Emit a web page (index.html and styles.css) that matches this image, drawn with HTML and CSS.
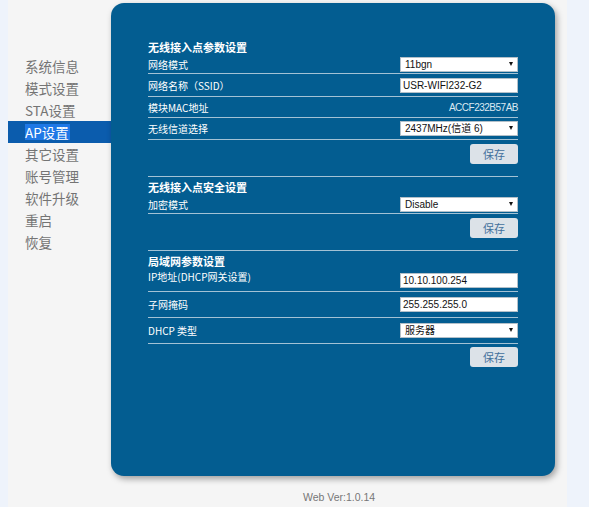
FILE: index.html
```html
<!DOCTYPE html>
<html lang="zh-CN">
<head>
<meta charset="utf-8">
<title>AP设置</title>
<link rel="stylesheet" href="styles.css">
</head>
<body>
<div class="page">
  <div class="layout">
    <ul class="menu">
      <li class="menu-item">系统信息</li>
      <li class="menu-item">模式设置</li>
      <li class="menu-item">STA设置</li>
      <li class="menu-item active"><span class="menu-label">AP设置</span></li>
      <li class="menu-item">其它设置</li>
      <li class="menu-item">账号管理</li>
      <li class="menu-item">软件升级</li>
      <li class="menu-item">重启</li>
      <li class="menu-item">恢复</li>
    </ul>
    <main class="panel">
      <section class="group">
        <div class="row head">
          <div class="group-title">无线接入点参数设置</div>
          <div class="subrow">
            <span class="label">网络模式</span>
            <span class="select-wrap"><select class="select"><option>11bgn</option></select></span>
          </div>
        </div>
        <div class="row r22"><span class="label">网络名称（SSID）</span><input class="field" type="text" value="USR-WIFI232-G2"></div>
        <div class="row r20"><span class="label">模块MAC地址</span><span class="value">ACCF232B57AB</span></div>
        <div class="row r21"><span class="label">无线信道选择</span><span class="select-wrap"><select class="select"><option>2437MHz(信道 6)</option></select></span></div>
        <div class="row actions"><button class="btn" type="button">保存</button></div>
      </section>
      <section class="group">
        <div class="row head">
          <div class="group-title">无线接入点安全设置</div>
          <div class="subrow">
            <span class="label">加密模式</span>
            <span class="select-wrap"><select class="select"><option>Disable</option></select></span>
          </div>
        </div>
        <div class="row actions"><button class="btn" type="button">保存</button></div>
      </section>
      <section class="group">
        <div class="row head">
          <div class="group-title">局域网参数设置</div>
          <div class="subrow tall">
            <span class="label">IP地址(DHCP网关设置)</span>
            <input class="field" type="text" value="10.10.100.254">
          </div>
        </div>
        <div class="row r25"><span class="label">子网掩码</span><input class="field" type="text" value="255.255.255.0"></div>
        <div class="row r25"><span class="label">DHCP 类型</span><span class="select-wrap"><select class="select"><option>服务器</option></select></span></div>
        <div class="row actions last"><button class="btn" type="button">保存</button></div>
      </section>
    </main>
  </div>
  <footer class="footer">Web Ver:1.0.14</footer>
</div>
</body>
</html>
```

FILE: styles.css
```css
* { box-sizing: border-box; }
html, body { margin: 0; padding: 0; }
body {
  background: #eef3fb;
  font-family: "Noto Sans CJK SC", "Liberation Sans", sans-serif;
}
.page {
  margin-left: 8px;
  width: 559px;
  min-height: 507px;
  background: #f5f5f5;
}
.layout {
  display: flex;
  align-items: flex-start;
}
.menu {
  list-style: none;
  margin: 0;
  padding: 55px 0 0 0;
  width: 103px;
  flex: none;
}
.menu-item {
  height: 22px;
  line-height: 22px;
  padding-left: 17px;
  font-size: 13.5px;
  color: #747474;
  white-space: nowrap;
}
.menu-item.active {
  background: #0b5cad;
  color: #fff;
  display: flex;
  align-items: center;
}
.menu-label {
  background: #1f78e6;
  line-height: 16px;
  height: 16px;
  padding-right: 1px;
}
.panel {
  margin-top: 3px;
  width: 444px;
  height: 473px;
  flex: none;
  background: #035d91;
  border-radius: 13px;
  box-shadow: 2px 3px 6px rgba(0, 0, 0, 0.35);
  padding: 34px 37px 0 37px;
  color: #fff;
}
.row {
  display: flex;
  justify-content: space-between;
  align-items: center;
  border-bottom: 1px solid #a3c2d5;
}
.row.head {
  display: block;
  padding-top: 3px;
}
.row.r20 { height: 21px; }
.row.r21 { height: 22px; }
.row.r22 { height: 23px; }
.row.r25 { height: 26px; }
.row.actions {
  height: 37px;
  align-items: flex-start;
  justify-content: flex-end;
  padding-top: 4px;
}
.row.actions.last {
  border-bottom: none;
  padding-top: 3px;
}
.group-title {
  font-size: 11px;
  font-weight: bold;
  line-height: 15px;
  height: 15px;
}
.subrow {
  display: flex;
  justify-content: space-between;
  align-items: center;
  height: 18px;
}
.subrow.tall { height: 22px; }
.subrow.tall .label { align-self: flex-start; }
.label {
  font-size: 10px;
  line-height: 15px;
  white-space: nowrap;
}
.value {
  font-family: "Liberation Sans", Arial, sans-serif;
  font-size: 10px;
  letter-spacing: -0.5px;
  color: #dbe9f2;
}
.select-wrap {
  position: relative;
  display: block;
  width: 118px;
  height: 15px;
}
.select-wrap::after {
  content: "";
  position: absolute;
  right: 5px;
  top: 5px;
  border-left: 2.5px solid transparent;
  border-right: 2.5px solid transparent;
  border-top: 4px solid #111;
  pointer-events: none;
}
.select {
  -webkit-appearance: none;
  appearance: none;
  display: block;
  width: 118px;
  height: 15px;
  margin: 0;
  border: 1px solid #b3c0c9;
  border-radius: 0;
  background: #fff;
  color: #111;
  padding: 0 0 0 4px;
  font-family: "Liberation Sans", Arial, "Noto Sans CJK SC", sans-serif;
  font-size: 10px;
  line-height: 13px;
  outline: none;
}
.field {
  display: block;
  width: 118px;
  height: 15px;
  margin: 0;
  border: 1px solid #b3c0c9;
  background: #fff;
  color: #111;
  padding: 0 2px;
  font-family: "Liberation Sans", Arial, sans-serif;
  font-size: 10px;
  line-height: 13px;
  outline: none;
}
.btn {
  width: 48px;
  height: 20px;
  border: none;
  border-radius: 3px;
  background: #dce2e8;
  color: #43709c;
  font-family: "Noto Sans CJK SC", sans-serif;
  font-size: 11px;
  line-height: 20px;
  padding: 0;
}
.footer {
  margin-top: 14px;
  padding-left: 103px;
  text-align: center;
  font-family: "Liberation Sans", Arial, sans-serif;
  font-size: 10.5px;
  line-height: 14px;
  color: #777;
}
```
